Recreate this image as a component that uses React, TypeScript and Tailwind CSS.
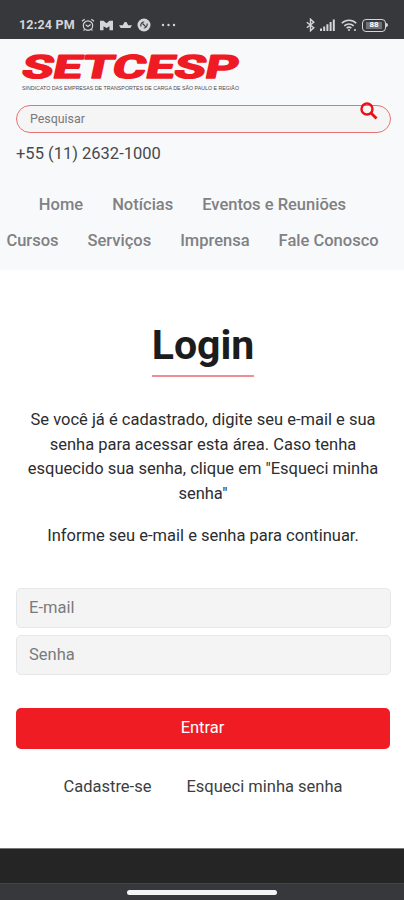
import { useState } from 'react'

const navRows = [
  ['Home', 'Notícias', 'Eventos e Reuniões'],
  ['Cursos', 'Serviços', 'Imprensa', 'Fale Conosco'],
]

function StatusBar() {
  return (
    <div className="flex h-[39px] shrink-0 items-start justify-between bg-[#36383c] pr-[16px] pl-[19px] pt-[17px] text-[#d4d5d7]">
      <div className="flex h-4 items-center">
        <span className="w-[56px] whitespace-nowrap text-[12.5px] font-bold leading-4 tracking-[0.2px]">12:24 PM</span>
        <svg className="ml-[6px] h-[14px] w-[14px]" viewBox="0 0 14 14" fill="none" stroke="currentColor" strokeWidth="1.2">
          <circle cx="7" cy="7.6" r="4.7" />
          <path d="M1 3.3 3.6 1.2M13 3.3 10.4 1.2M4.7 6.7 7 8.6l2.6-2M3.6 11.3l-1 1.4M10.4 11.3l1 1.4" />
        </svg>
        <svg className="ml-[5px] h-[11px] w-[13px]" viewBox="0 0 13 11" fill="currentColor">
          <path d="M0 .8h3.5l3 2.4L9.5.8H13v9.4H9.5V6.3l-3 1.6-3-1.6v3.9H0z" />
        </svg>
        <svg className="ml-[6px] h-[8px] w-[13px]" viewBox="0 0 13 8" fill="currentColor">
          <path d="M0 4.3h3.8L5.6 1h1.800l1.800 3.300H13L11.300 7H1.700z" />
        </svg>
        <svg className="ml-[5px] h-[14px] w-[14px]" viewBox="0 0 14 14">
          <circle cx="7" cy="7" r="6.5" fill="currentColor" />
          <path d="M4 8.5C3.2 6 5 3.8 7.2 4M10 5.5C10.8 8 9 10.2 6.8 10M5.5 5.5l3.200 3.200" fill="none" stroke="#36383c" strokeWidth="1.2" />
        </svg>
        <svg className="ml-[10px] h-1 w-[15px]" viewBox="0 0 15 4" fill="currentColor">
          <circle cx="2" cy="2" r="1.2" />
          <circle cx="7.5" cy="2" r="1.2" />
          <circle cx="13" cy="2" r="1.2" />
        </svg>
      </div>
      <div className="flex h-4 items-center">
        <svg className="h-[14px] w-[9px]" viewBox="0 0 9 14" fill="none" stroke="currentColor" strokeWidth="1.4">
          <path d="M.8 4.2 7.8 9.8 4.5 12.8V1.2l3.3 3L.8 9.8" />
        </svg>
        <svg className="ml-[5px] h-[12px] w-[15px]" viewBox="0 0 15 12" fill="currentColor">
          <path d="M0 9.5h2V12H0zM3.2 7.5h2V12h-2zM6.4 5.3h2V12h-2zM9.6 3h2v9h-2zM12.8.5h2V12h-2z" />
        </svg>
        <svg className="ml-[6px] h-[13px] w-[16px]" viewBox="0 0 16 13" fill="none" stroke="currentColor" strokeWidth="1.6">
          <path d="M.8 4.3C4.8.3 11.2.3 15.2 4.3M3.3 6.9c2.7-2.6 6.7-2.6 9.4 0M5.7 9.2c1.4-1.3 3.2-1.3 4.6 0" />
          <circle cx="8" cy="11" r="1" fill="currentColor" stroke="none" />
          <path d="M13 11h2" />
        </svg>
        <div className="ml-[5px] flex h-[13px] w-[24px] items-center justify-center rounded-[4px] border-[1.5px] border-current">
          <span className="flex h-[7px] w-[16px] items-center justify-center bg-[#707276] text-[8px] font-bold leading-none text-white">88</span>
        </div>
        <div className="h-[4px] w-[2px] rounded-r-sm bg-current" />
      </div>
    </div>
  )
}

function Logo() {
  return (
    <svg className="ml-[6px] block h-[42px] w-[220px] overflow-visible" viewBox="0 0 220 42">
      <text
        x="-1"
        y="26.5"
        textLength="216"
        lengthAdjust="spacingAndGlyphs"
        strokeLinejoin="round"
        className="fill-[#ee1b24] stroke-[#ee1b24] stroke-[1.6px] font-['Roboto'] text-[32px] font-bold"
        transform="translate(5 0) skewX(-12)"
      >
        SETCESP
      </text>
      <text x="0" y="38.5" textLength="217" lengthAdjust="spacingAndGlyphs" className="fill-[#4b4b4d] font-['Liberation_Sans'] text-[6px]">
        SINDICATO DAS EMPRESAS DE TRANSPORTES DE CARGA DE SÃO PAULO E REGIÃO
      </text>
    </svg>
  )
}

export default function App() {
  const [email, setEmail] = useState('')
  const [password, setPassword] = useState('')

  const field =
    'h-[40px] w-full rounded-[5px] border border-[#e6e7e8] bg-[#f4f4f4] px-[12.5px] text-[16.5px] text-[#495057] outline-none placeholder:text-[#797b7d]'

  return (
    <div className="flex h-[900px] w-[404px] flex-col overflow-hidden bg-white font-['Roboto',sans-serif] text-[16.5px] text-[#2b2d30]">
      <StatusBar />

      <header className="h-[231px] shrink-0 bg-[#f8f9fb] px-4 pt-[12px]">
        <Logo />
        <div className="relative mt-[12px] mr-[-3px]">
          <input
            type="text"
            placeholder="Pesquisar"
            className="block h-[28px] w-full rounded-full border-[1.5px] border-[#e57373] bg-[#f5f5f5] px-[13px] pb-[2px] text-[12.4px] outline-none placeholder:text-[#77797b]"
          />
          <svg className="absolute top-[-3px] right-[13px] h-[18px] w-[18px]" viewBox="0 0 18 18" fill="none" stroke="#ec0f17">
            <circle cx="7" cy="7" r="5.5" strokeWidth="2.4" />
            <path d="m11 11 5.5 5.5" strokeWidth="2.8" />
          </svg>
        </div>
        <p className="mt-[8px] leading-[25px] text-[#47494c]">+55 (11) 2632-1000</p>
        <nav className="mt-[21px] -ml-4 w-[385px]">
          {navRows.map((row) => (
            <div key={row[0]} className="flex h-[36px] items-center justify-center gap-[29px]">
              {row.map((item) => (
                <a key={item} href="#" className="whitespace-nowrap font-medium text-[#7f8183]">
                  {item}
                </a>
              ))}
            </div>
          ))}
        </nav>
      </header>

      <main className="flex h-[579px] shrink-0 flex-col items-center pr-[15px] pl-[17px] pt-[49px] text-center">
        <h1 className="text-[41px] font-bold leading-[53px] text-[#1b1c1e]">
          Login
          <span className="mt-[3px] block h-[2px] bg-[#f08f93]" />
        </h1>
        <p className="mt-[31px] w-[360px] leading-[24.7px]">
          Se você já é cadastrado, digite seu e-mail e sua senha para acessar esta área. Caso tenha esquecido sua senha, clique em "Esqueci minha senha"
        </p>
        <p className="mt-[16px] leading-[25px]">Informe seu e-mail e senha para continuar.</p>

        <form className="mt-[40px] -mx-px w-[375px]" onSubmit={(e) => e.preventDefault()}>
          <input type="email" placeholder="E-mail" value={email} onChange={(e) => setEmail(e.target.value)} className={`block ${field}`} />
          <input type="password" placeholder="Senha" value={password} onChange={(e) => setPassword(e.target.value)} className={`mt-[7px] block ${field}`} />
          <button type="submit" className="mt-[33px] block h-[41px] w-[374px] rounded-[5px] bg-[#ef1c24] text-white">
            Entrar
          </button>
        </form>

        <div className="mt-[25px] flex gap-[35px] leading-[25px] text-[#3c3e41]">
          <a href="#">Cadastre-se</a>
          <a href="#">Esqueci minha senha</a>
        </div>
      </main>

      <footer className="-mt-px h-[35px] shrink-0 border-t border-[#777] bg-[#252525]" />
      <div className="flex flex-1 justify-center border-t border-[#424447] bg-[#36383c] pt-[6px]">
        <div className="h-[5px] w-[150px] rounded-full bg-[#f4f5f6]" />
      </div>
    </div>
  )
}
